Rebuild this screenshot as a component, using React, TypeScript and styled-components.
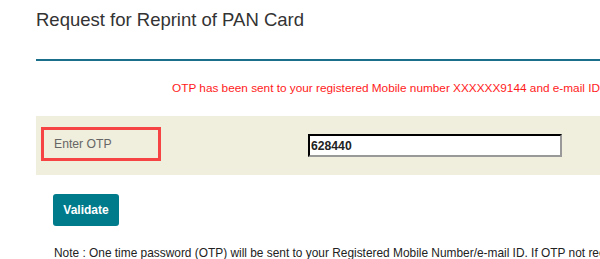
import React from 'react';
import styled, { createGlobalStyle } from 'styled-components';

const GlobalStyle = createGlobalStyle`
  html, body {
    margin: 0;
    padding: 0;
    background: #fff;
    overflow: hidden;
  }
  body {
    font-family: "Liberation Sans", Arial, sans-serif;
  }
`;

const Page = styled.div`
  width: 900px;
  padding-left: 36px;
`;

const Title = styled.h1`
  margin: 0;
  padding-top: 9px;
  height: 50px;
  font-size: 18.5px;
  font-weight: normal;
  color: #333;
  line-height: 22px;
`;

const Rule = styled.hr`
  margin: 0;
  border: 0;
  height: 2px;
  background: #1a6f8b;
`;

const Message = styled.p`
  margin: 0;
  padding: 20px 0 0 136px;
  height: 35px;
  font-size: 11.8px;
  line-height: 14px;
  color: #ff1a1a;
  white-space: nowrap;
`;

const FormRow = styled.div`
  display: flex;
  align-items: center;
  height: 59px;
  background: #f0eedc;
  box-sizing: border-box;
`;

const LabelCell = styled.div`
  margin: 0 0 4px 5px;
  width: 120px;
  height: 34px;
  box-sizing: border-box;
  border: 3px solid #f64444;
  padding-left: 10px;
  display: flex;
  align-items: center;
  font-size: 12.2px;
  color: #666;
`;

const OtpInput = styled.input`
  margin-left: 147px;
  width: 254px;
  height: 23px;
  box-sizing: border-box;
  border: 2px inset #808080;
  border-top-color: #222;
  border-left-color: #222;
  border-bottom-color: #999;
  border-right-color: #999;
  padding: 0 1px;
  font-family: "Liberation Sans", Arial, sans-serif;
  font-size: 12.2px;
  font-weight: bold;
  color: #222;
  background: #fff;
  outline: none;
`;

const Actions = styled.div`
  padding: 19px 0 0 17px;
  height: 51px;
`;

const ValidateButton = styled.button`
  width: 66px;
  height: 32px;
  border: 0;
  border-radius: 3px;
  background: #007b8c;
  color: #fff;
  font-family: "Liberation Sans", Arial, sans-serif;
  font-size: 12px;
  font-weight: bold;
  cursor: pointer;
`;

const Note = styled.p`
  margin: 0;
  padding: 1px 0 0 18px;
  font-size: 11.9px;
  line-height: 14px;
  color: #222;
  white-space: nowrap;
`;

export default function App() {
  return (
    <>
      <GlobalStyle />
      <Page>
        <Title>Request for Reprint of PAN Card</Title>
        <Rule />
        <Message>
          OTP has been sent to your registered Mobile number XXXXXX9144 and e-mail ID
        </Message>
        <FormRow>
          <LabelCell>Enter OTP</LabelCell>
          <OtpInput type="text" defaultValue="628440" />
        </FormRow>
        <Actions>
          <ValidateButton>Validate</ValidateButton>
        </Actions>
        <Note>
          Note : One time password (OTP) will be sent to your Registered Mobile Number/e-mail ID. If OTP not received
        </Note>
      </Page>
    </>
  );
}
